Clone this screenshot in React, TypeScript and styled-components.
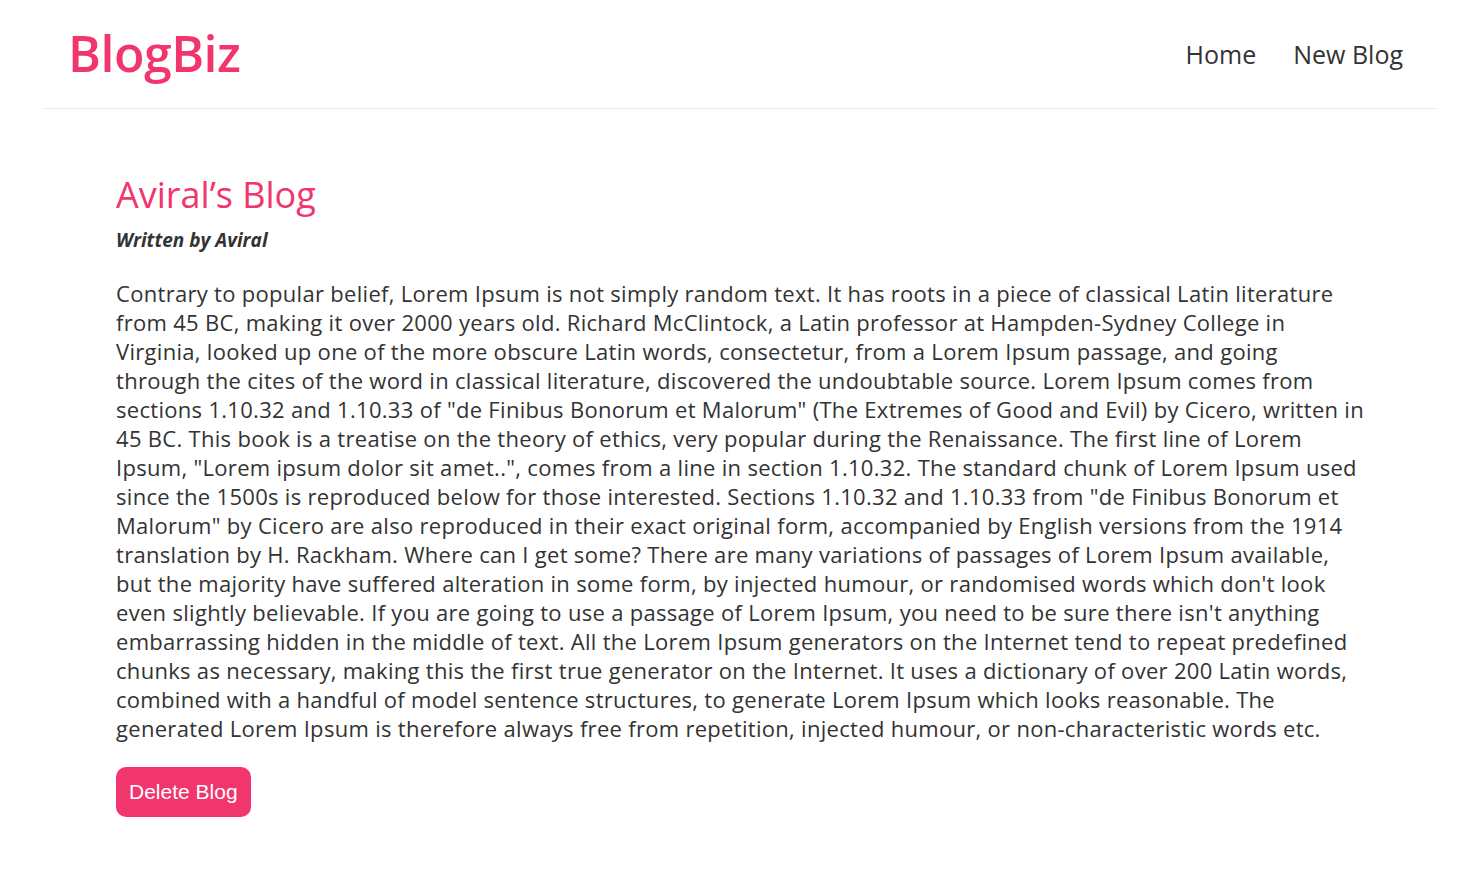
import React from "react";
import styled, { createGlobalStyle } from "styled-components";

const Global = createGlobalStyle`
  * { margin: 0; box-sizing: border-box; }
  body { margin: 0; background: #fff; font-family: "Open Sans", "Lato", sans-serif; color: #333; }
`;

const Page = styled.div`
  display: flex;
  flex-direction: column;
  align-items: flex-start;
`;

const Navbar = styled.nav`
  width: 1394px;
  margin-left: 43px;
  height: 109px;
  padding: 0 34px 0 25px;
  display: flex;
  align-items: center;
  border-bottom: 1px solid #e8e8e8;
`;

const Logo = styled.h1`
  color: #f1356d;
  font-size: 50px;
  font-weight: 600;
  letter-spacing: -0.5px;
  margin-top: -2px;
`;

const Links = styled.div`
  margin-left: auto;
  display: flex;
  gap: 37px;
`;

const NavLink = styled.a`
  font-size: 25px;
  color: #333;
  text-decoration: none;
`;

const Content = styled.main`
  width: 1240px;
  margin-left: 116px;
  padding-top: 64px;
`;

const Title = styled.h2`
  font-size: 36px;
  font-weight: 500;
  color: #f1356d;
  line-height: 44px;
`;

const Author = styled.p`
  font-size: 19px;
  font-weight: 700;
  font-style: italic;
  margin-top: 10px;
`;

const Body = styled.div`
  font-size: 22px;
  letter-spacing: 0.3px;
  line-height: 29px;
  margin-top: 26px;
`;

const Line = styled.span`
  display: block;
  white-space: nowrap;
`;

const DeleteButton = styled.button`
  margin-top: 24px;
  background: #f1356d;
  color: #fff;
  border: 0;
  border-radius: 10px;
  height: 50px;
  padding: 0 13px;
  font-family: "Liberation Sans", Arial, sans-serif;
  font-size: 21px;
  cursor: pointer;
`;

const lines = [
  "Contrary to popular belief, Lorem Ipsum is not simply random text. It has roots in a piece of classical Latin literature",
  "from 45 BC, making it over 2000 years old. Richard McClintock, a Latin professor at Hampden-Sydney College in",
  "Virginia, looked up one of the more obscure Latin words, consectetur, from a Lorem Ipsum passage, and going",
  "through the cites of the word in classical literature, discovered the undoubtable source. Lorem Ipsum comes from",
  "sections 1.10.32 and 1.10.33 of \"de Finibus Bonorum et Malorum\" (The Extremes of Good and Evil) by Cicero, written in",
  "45 BC. This book is a treatise on the theory of ethics, very popular during the Renaissance. The first line of Lorem",
  "Ipsum, \"Lorem ipsum dolor sit amet..\", comes from a line in section 1.10.32. The standard chunk of Lorem Ipsum used",
  "since the 1500s is reproduced below for those interested. Sections 1.10.32 and 1.10.33 from \"de Finibus Bonorum et",
  "Malorum\" by Cicero are also reproduced in their exact original form, accompanied by English versions from the 1914",
  "translation by H. Rackham. Where can I get some? There are many variations of passages of Lorem Ipsum available,",
  "but the majority have suffered alteration in some form, by injected humour, or randomised words which don't look",
  "even slightly believable. If you are going to use a passage of Lorem Ipsum, you need to be sure there isn't anything",
  "embarrassing hidden in the middle of text. All the Lorem Ipsum generators on the Internet tend to repeat predefined",
  "chunks as necessary, making this the first true generator on the Internet. It uses a dictionary of over 200 Latin words,",
  "combined with a handful of model sentence structures, to generate Lorem Ipsum which looks reasonable. The",
  "generated Lorem Ipsum is therefore always free from repetition, injected humour, or non-characteristic words etc.",
];

export default function App() {
  return (
    <Page>
      <Global />
      <Navbar>
        <Logo>BlogBiz</Logo>
        <Links>
          <NavLink href="#">Home</NavLink>
          <NavLink href="#">New Blog</NavLink>
        </Links>
      </Navbar>
      <Content>
        <Title>Aviral’s Blog</Title>
        <Author>Written by Aviral</Author>
        <Body>
          {lines.map((l, i) => (
            <Line key={i}>{l} </Line>
          ))}
        </Body>
        <DeleteButton>Delete Blog</DeleteButton>
      </Content>
    </Page>
  );
}
